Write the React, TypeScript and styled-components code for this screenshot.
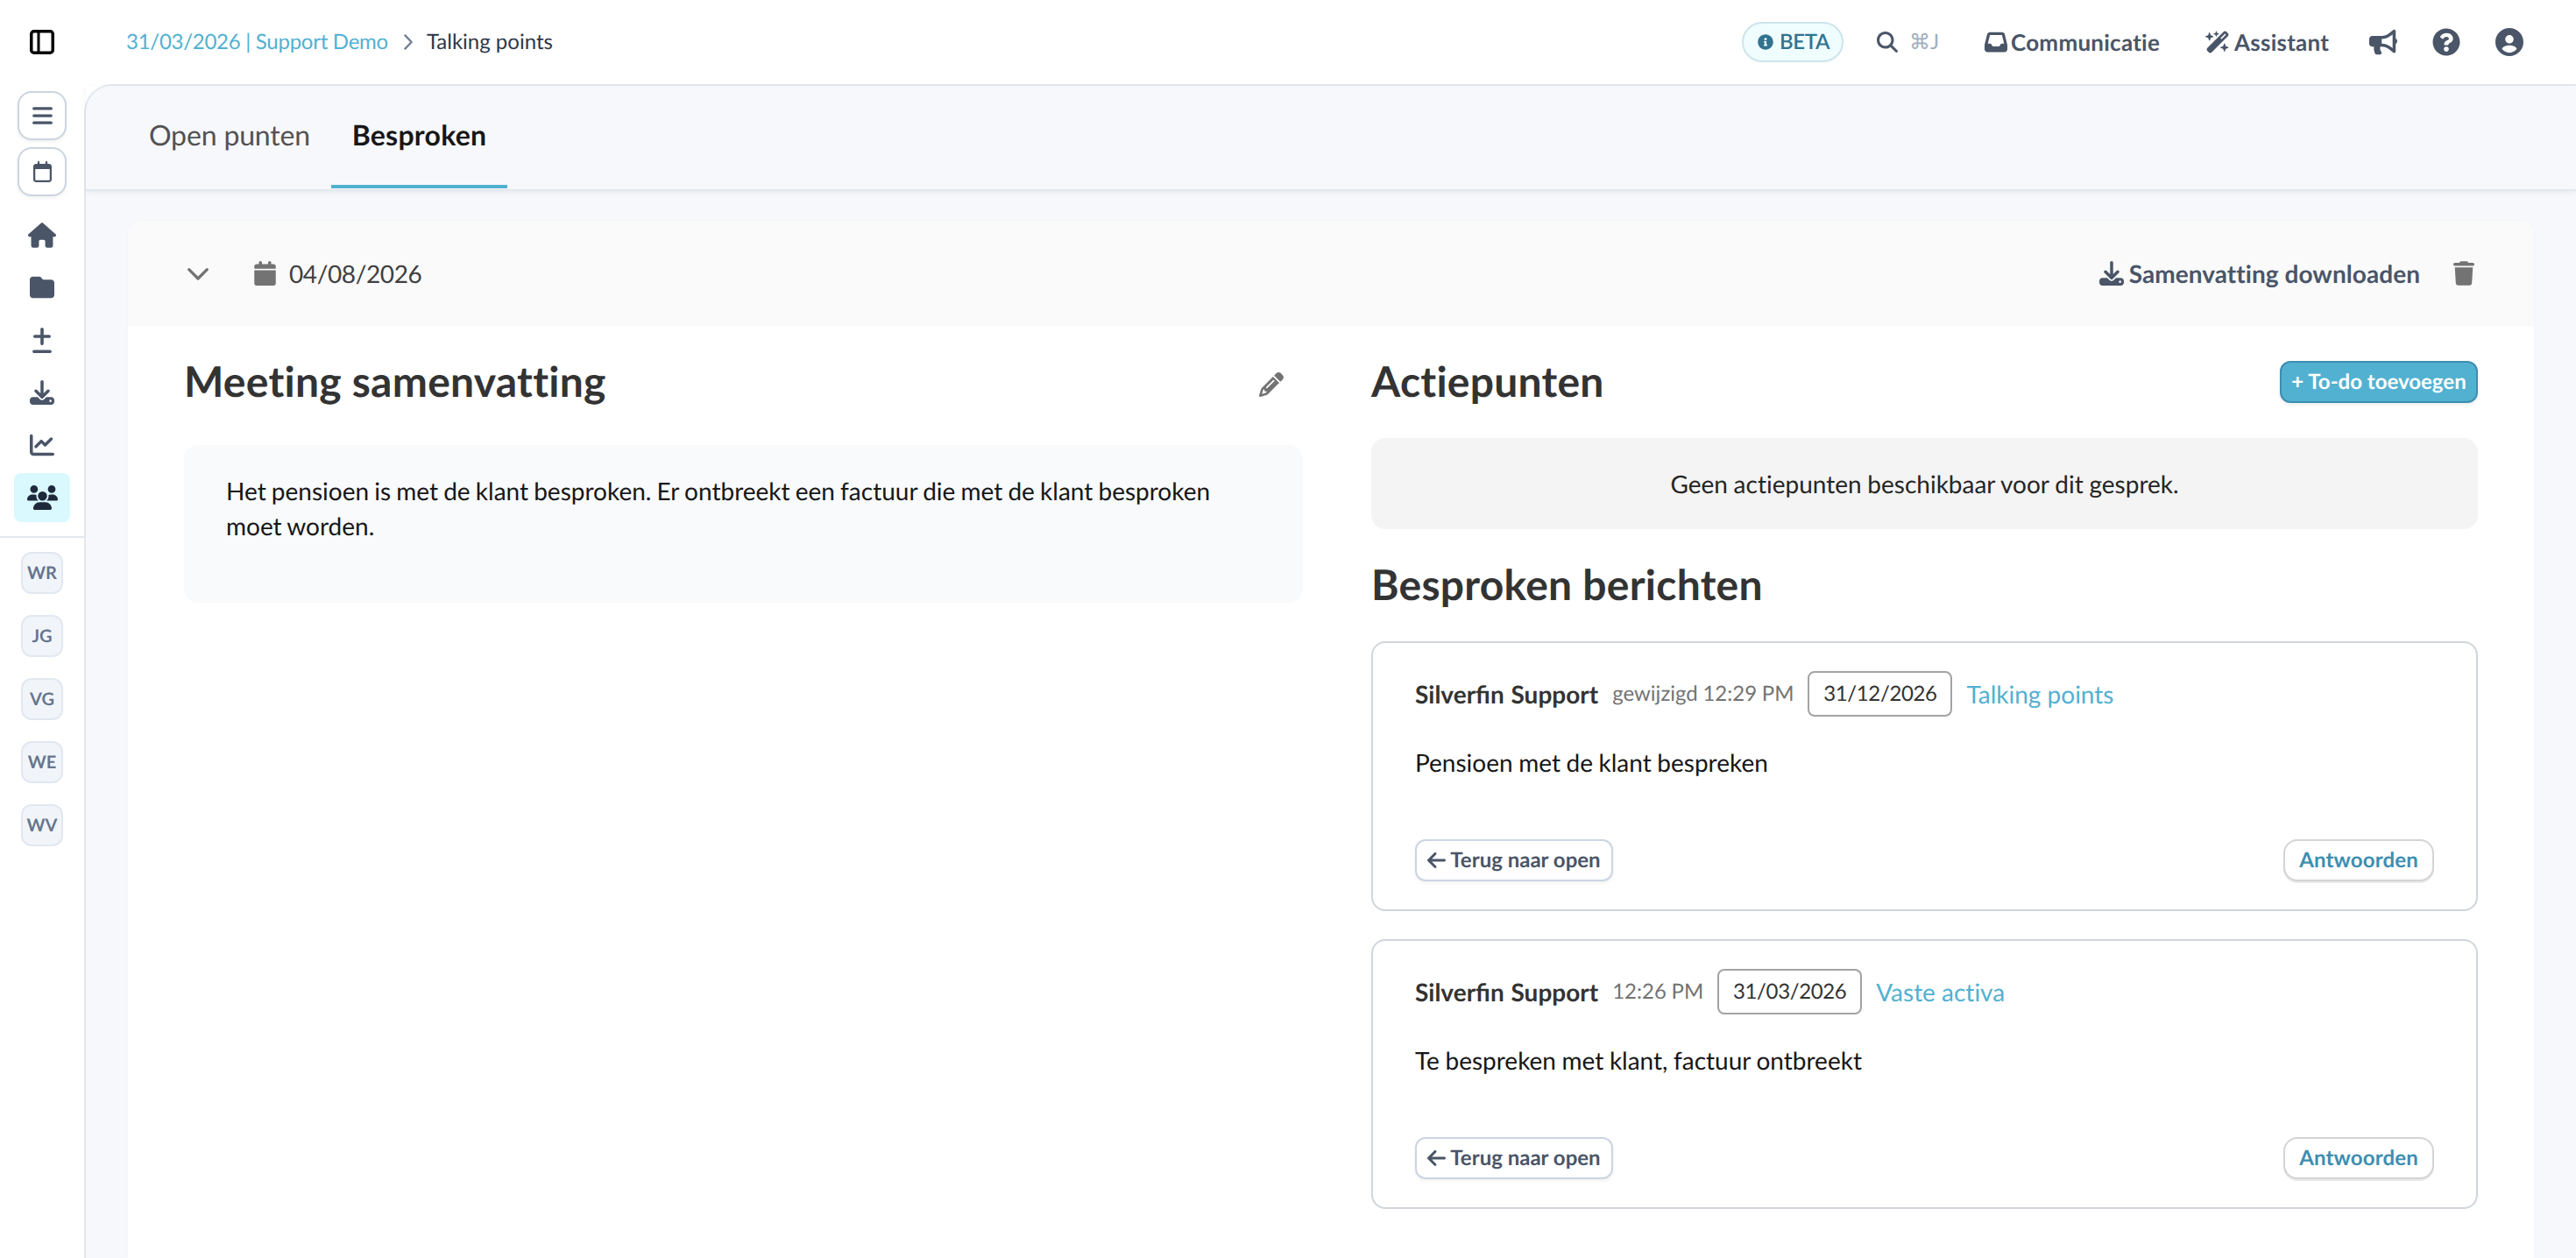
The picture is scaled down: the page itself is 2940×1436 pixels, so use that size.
import React from "react";
import styled, { createGlobalStyle } from "styled-components";
import {
  FaBars,
  FaRegCalendar,
  FaHouse,
  FaFolder,
  FaPlusMinus,
  FaDownload,
  FaChartLine,
  FaUsers,
  FaMagnifyingGlass,
  FaInbox,
  FaWandMagicSparkles,
  FaCalendar,
  FaTrash,
  FaPencil,
  FaArrowLeft,
} from "react-icons/fa6";
import { FaBullhorn, FaInfoCircle, FaQuestionCircle } from "react-icons/fa";

const slate = "#4a5568";
const line = "#e2e8ef";
const cyan = "#52b1d1";

const GlobalStyle = createGlobalStyle`
  *, *::before, *::after { box-sizing: border-box; }
  body {
    margin: 0;
    background: #fff;
    font-family: Lato, "DejaVu Sans", sans-serif;
    font-size: 28px;
    line-height: 40px;
    color: #171717;
    overflow: hidden;
    text-rendering: geometricPrecision;
    font-variant-ligatures: none;
  }
  button { font: inherit; font-variant-ligatures: none; text-rendering: inherit; margin: 0; cursor: pointer; }
  h2, p { margin: 0; }
`;

const Shell = styled.div`
  display: grid;
  grid-template-columns: 96px 1fr;
  grid-template-rows: 96px 1fr;
  width: 2940px;
  height: 1436px;
  overflow: hidden;
`;

const Icon = styled.span<{ $w: number; $h: number; $color?: string }>`
  display: inline-flex;
  flex: none;
  width: ${(p) => p.$w}px;
  height: ${(p) => p.$h}px;
  color: ${(p) => p.$color ?? "inherit"};
  svg {
    display: block;
    width: 100%;
    height: 100%;
  }
`;

const ToggleCell = styled.div`
  display: flex;
  align-items: center;
  justify-content: center;
`;

const TopBar = styled.header`
  display: flex;
  align-items: center;
  justify-content: space-between;
  padding: 0 60px 0 48px;
`;

const Breadcrumbs = styled.nav`
  display: flex;
  align-items: center;
  font-size: 24px;
  line-height: 32px;
  color: #2d3748;
`;

const CrumbLink = styled.a`
  color: ${cyan};
  margin-right: 18px;
  letter-spacing: -0.27px;
`;

const Crumb = styled.span`
  margin-left: 16px;
`;

const Tools = styled.div`
  display: flex;
  align-items: center;
  color: ${slate};
`;

const Beta = styled.span`
  display: flex;
  align-items: center;
  gap: 7px;
  width: 116px;
  height: 46px;
  margin-right: 38px;
  padding: 0 0 0 16px;
  border: 2px solid #cde4eb;
  border-radius: 23px;
  background: #f0fdff;
  color: #32738f;
  font-size: 24px;
  font-weight: 600;
  letter-spacing: -0.4px;
`;

const Search = styled.span`
  display: flex;
  align-items: center;
  width: 123px;
  gap: 13px;
`;

const Shortcut = styled.span`
  color: #a0aec0;
  font-size: 24px;
  line-height: 32px;
`;

const ToolLink = styled.a<{ $width: number; $gap: number }>`
  display: flex;
  align-items: center;
  gap: ${(p) => p.$gap}px;
  width: ${(p) => p.$width}px;
  font-size: 26px;
  font-weight: 700;
  letter-spacing: 0.25px;
  white-space: nowrap;
`;

const ToolIcons = styled.div`
  display: flex;
  gap: 40px;
`;

const Sidebar = styled.aside`
  display: flex;
  flex-direction: column;
  align-items: center;
  padding-top: 8px;
  color: ${slate};
`;

const SquareButton = styled.button`
  display: flex;
  align-items: center;
  justify-content: center;
  width: 56px;
  height: 56px;
  margin-bottom: 8px;
  padding: 0;
  border: 2px solid #cbd5e0;
  border-radius: 16px;
  background: #fff;
  color: ${slate};
  box-shadow: 0 2px 4px rgba(0, 0, 0, 0.06);
`;

const NavList = styled.nav`
  display: flex;
  flex-direction: column;
  gap: 4px;
  margin-top: 8px;
`;

const NavItem = styled.a<{ $active?: boolean }>`
  display: flex;
  align-items: center;
  justify-content: center;
  width: 64px;
  height: 56px;
  border-radius: 8px;
  background: ${(p) => (p.$active ? "#d9f9ff" : "transparent")};
  color: ${(p) => (p.$active ? "#1e293b" : slate)};
`;

const AvatarList = styled.div`
  display: flex;
  flex-direction: column;
  align-items: center;
  align-self: stretch;
  gap: 24px;
  margin-top: 16px;
  padding-top: 16px;
  border-top: 2px solid ${line};
`;

const Avatar = styled.span`
  display: flex;
  align-items: center;
  justify-content: center;
  width: 48px;
  height: 48px;
  border: 2px solid #e2e8f0;
  border-radius: 12px;
  background: #f1f5fa;
  color: #67758d;
  font-size: 20px;
  font-weight: 700;
`;

const Main = styled.main`
  display: flex;
  flex-direction: column;
  min-width: 0;
  border-top: 2px solid ${line};
  border-left: 2px solid ${line};
  border-top-left-radius: 32px;
  background: #f7f8fc;
`;

const Tabs = styled.div`
  display: flex;
  flex: none;
  height: 120px;
  padding-left: 48px;
  border-bottom: 2px solid ${line};
  box-shadow: 0 2px 6px rgba(0, 0, 0, 0.06);
`;

const Tab = styled.a<{ $active?: boolean; $width: number }>`
  display: flex;
  justify-content: center;
  width: ${(p) => p.$width}px;
  height: 117px;
  padding: 34px 0 0;
  border-bottom: 4px solid ${(p) => (p.$active ? cyan : "transparent")};
  color: ${(p) => (p.$active ? "#171717" : "#525252")};
  font-size: 32px;
  line-height: 44px;
  font-weight: ${(p) => (p.$active ? 700 : 400)};
  letter-spacing: ${(p) => (p.$active ? 0.25 : -0.15)}px;
`;

const Card = styled.section`
  display: flex;
  flex-direction: column;
  flex: 1;
  margin: 34px 48px 0 48px;
  border-radius: 16px 16px 0 0;
  background: #fff;
  box-shadow: 0 0 3px rgba(0, 0, 0, 0.03);
  overflow: hidden;
`;

const CardHeader = styled.div`
  display: flex;
  align-items: center;
  justify-content: space-between;
  height: 120px;
  padding: 0 68px 0 68px;
  background: #fafafa;
`;

const MeetingDate = styled.div`
  display: flex;
  align-items: center;
  color: #404040;
`;

const ToggleIcon = styled(Icon)`
  margin-top: 2px;
`;

const DateIcon = styled(Icon)`
  margin-left: 52px;
`;

const DateLabel = styled.span`
  margin-left: 15px;
  letter-spacing: -0.38px;
`;

const HeaderActions = styled.div`
  display: flex;
  align-items: center;
  color: ${slate};
`;

const DownloadLabel = styled.span`
  margin: 0 38px 0 6px;
  font-weight: 700;
  letter-spacing: 0.06px;
`;

const Columns = styled.div`
  display: grid;
  grid-template-columns: 1277px 1263px;
  column-gap: 78px;
  padding: 40px 64px 0;
`;

const Column = styled.div`
  display: flex;
  flex-direction: column;
`;

const HeadingRow = styled.div`
  display: flex;
  align-items: center;
  justify-content: space-between;
  height: 48px;
`;

const Heading = styled.h2`
  color: #333;
  font-size: 48px;
  line-height: 48px;
  font-weight: 700;
  letter-spacing: 0.25px;
`;

const EditButton = styled.span`
  display: flex;
  margin: 6px 22px 0 0;
  color: #737373;
`;

const Summary = styled.div`
  height: 180px;
  margin-top: 48px;
  padding: 32px 64px 0 48px;
  border-radius: 16px;
  background: #f8fafc;
  word-spacing: -1px;
`;

const PrimaryButton = styled.button`
  height: 48px;
  width: 226px;
  padding: 0;
  border: 2px solid #3d8eb0;
  border-radius: 12px;
  background: ${cyan};
  color: #fff;
  font-size: 24px;
  line-height: 32px;
  font-weight: 700;
  white-space: nowrap;
  box-shadow: 0 2px 4px rgba(0, 0, 0, 0.08);
`;

const EmptyBox = styled.div`
  display: flex;
  align-items: center;
  justify-content: center;
  height: 104px;
  margin: 40px 0;
  border-radius: 16px;
  background: #f4f4f4;
  color: #262626;
  word-spacing: -0.4px;
`;

const Messages = styled.div`
  display: flex;
  flex-direction: column;
  gap: 32px;
  margin-top: 40px;
`;

const Message = styled.article`
  display: flex;
  flex-direction: column;
  height: 308px;
  padding: 32px 48px;
  border: 2px solid #d1d5db;
  border-radius: 16px;
`;

const MessageMeta = styled.div`
  display: flex;
  align-items: center;
  gap: 16px;
  height: 52px;
`;

const Author = styled.span`
  color: #333;
  font-weight: 700;
  font-variant-ligatures: normal;
  word-spacing: 1px;
`;

const Time = styled.span`
  color: #737373;
  font-size: 24px;
  word-spacing: -0.5px;
`;

const PeriodBox = styled.span`
  display: flex;
  align-items: center;
  justify-content: center;
  width: 165px;
  height: 52px;
  border: 2px solid #a3a3a3;
  border-radius: 8px;
  color: #333;
  font-size: 24px;
  letter-spacing: -0.36px;
`;

const TopicLink = styled.a`
  color: ${cyan};
`;

const MessageText = styled.p`
  margin-top: 32px;
  word-spacing: -0.6px;
`;

const MessageActions = styled.div`
  display: flex;
  justify-content: space-between;
  margin-top: auto;
`;

const BackButton = styled.button`
  display: flex;
  align-items: center;
  justify-content: center;
  gap: 5px;
  width: 226px;
  height: 48px;
  padding: 0;
  border: 2px solid #cbd5e3;
  border-radius: 12px;
  background: #fff;
  color: ${slate};
  font-size: 24px;
  font-weight: 700;
  white-space: nowrap;
  box-shadow: 0 2px 4px rgba(0, 0, 0, 0.06);
`;

const ReplyButton = styled.button`
  width: 172px;
  height: 48px;
  padding: 0;
  border: 2px solid #d4d4d4;
  border-radius: 16px;
  background: #fff;
  color: #3d8eb0;
  font-size: 24px;
  font-weight: 700;
  letter-spacing: 0.15px;
  box-shadow: 0 2px 0 #e9e9e9;
`;

const PanelIcon = () => (
  <svg viewBox="0 0 28 28" fill="none" stroke="#000">
    <rect x="1.75" y="1.75" width="24.5" height="24.5" rx="3" strokeWidth="3.5" />
    <path d="M10 2v24" strokeWidth="3" />
  </svg>
);

const ChevronRight = () => (
  <svg viewBox="0 0 10 18" fill="none" stroke="#718096" strokeWidth="2.4" strokeLinecap="round" strokeLinejoin="round">
    <path d="M1.4 1.4 8.6 9l-7.200 7.600" />
  </svg>
);

const ChevronDown = () => (
  <svg viewBox="0 0 24 14" fill="none" stroke="#737373" strokeWidth="3.2" strokeLinecap="round" strokeLinejoin="round">
    <path d="M1.700 1.700 12 12 22.300 1.700" />
  </svg>
);

const AccountIcon = () => (
  <svg viewBox="2 2 20 20" fill="currentColor">
    <path d="M12 2C6.480 2 2 6.480 2 12s4.480 10 10 10 10-4.480 10-10S17.520 2 12 2zm0 5a3 3 0 1 1 0 6 3 3 0 0 1 0-6zm0 12.600c-2.300 0-4.200-1.100-5.300-2.700.500-1.500 2.900-2.500 5.300-2.500s4.800 1 5.300 2.500c-1.100 1.600-3 2.700-5.300 2.700z" />
  </svg>
);

const navItems = [
  { icon: <FaHouse />, w: 32, h: 29 },
  { icon: <FaFolder />, w: 28, h: 28 },
  { icon: <FaPlusMinus />, w: 22, h: 29 },
  { icon: <FaDownload />, w: 28, h: 28 },
  { icon: <FaChartLine />, w: 28, h: 28 },
  { icon: <FaUsers />, w: 35, h: 28, active: true },
];

const avatars = ["WR", "JG", "VG", "WE", "WV"];

const messages = [
  {
    author: "Silverfin Support",
    time: "gewijzigd 12:29 PM",
    period: "31/12/2026",
    topic: "Talking points",
    text: "Pensioen met de klant bespreken",
  },
  {
    author: "Silverfin Support",
    time: "12:26 PM",
    period: "31/03/2026",
    topic: "Vaste activa",
    text: "Te bespreken met klant, factuur ontbreekt",
  },
];

export default function App() {
  return (
    <>
      <GlobalStyle />
      <Shell>
        <ToggleCell>
          <Icon $w={28} $h={28}><PanelIcon /></Icon>
        </ToggleCell>
        <TopBar>
          <Breadcrumbs>
            <CrumbLink>31/03/2026 | Support Demo</CrumbLink>
            <Icon $w={10} $h={18}><ChevronRight /></Icon>
            <Crumb>Talking points</Crumb>
          </Breadcrumbs>
          <Tools>
            <Beta>
              <Icon $w={18} $h={18}><FaInfoCircle /></Icon>
              BETA
            </Beta>
            <Search>
              <Icon $w={24} $h={24}><FaMagnifyingGlass /></Icon>
              <Shortcut>⌘J</Shortcut>
            </Search>
            <ToolLink $width={252} $gap={4}>
              <Icon $w={26} $h={26}><FaInbox /></Icon>
              Communicatie
            </ToolLink>
            <ToolLink $width={187} $gap={5}>
              <Icon $w={28} $h={26}><FaWandMagicSparkles /></Icon>
              Assistant
            </ToolLink>
            <ToolIcons>
              <Icon $w={32} $h={32}><FaBullhorn /></Icon>
              <Icon $w={32} $h={32}><FaQuestionCircle /></Icon>
              <Icon $w={32} $h={32}><AccountIcon /></Icon>
            </ToolIcons>
          </Tools>
        </TopBar>

        <Sidebar>
          <SquareButton>
            <Icon $w={23} $h={26}><FaBars /></Icon>
          </SquareButton>
          <SquareButton>
            <Icon $w={21} $h={24}><FaRegCalendar /></Icon>
          </SquareButton>
          <NavList>
            {navItems.map((item, i) => (
              <NavItem key={i} $active={item.active}>
                <Icon $w={item.w} $h={item.h}>{item.icon}</Icon>
              </NavItem>
            ))}
          </NavList>
          <AvatarList>
            {avatars.map((a) => (
              <Avatar key={a}>{a}</Avatar>
            ))}
          </AvatarList>
        </Sidebar>

        <Main>
          <Tabs>
            <Tab $width={232}>Open punten</Tab>
            <Tab $active $width={201}>Besproken</Tab>
          </Tabs>
          <Card>
            <CardHeader>
              <MeetingDate>
                <ToggleIcon $w={24} $h={14}><ChevronDown /></ToggleIcon>
                <DateIcon $w={25} $h={28} $color="#737373"><FaCalendar /></DateIcon>
                <DateLabel>04/08/2026</DateLabel>
              </MeetingDate>
              <HeaderActions>
                <Icon $w={28} $h={28}><FaDownload /></Icon>
                <DownloadLabel>Samenvatting downloaden</DownloadLabel>
                <Icon $w={24} $h={28} $color="#737373"><FaTrash /></Icon>
              </HeaderActions>
            </CardHeader>
            <Columns>
              <Column>
                <HeadingRow>
                  <Heading>Meeting samenvatting</Heading>
                  <EditButton>
                    <Icon $w={28} $h={28}><FaPencil /></Icon>
                  </EditButton>
                </HeadingRow>
                <Summary>
                  Het pensioen is met de klant besproken. Er ontbreekt een factuur die met de klant besproken moet
                  worden.
                </Summary>
              </Column>
              <Column>
                <HeadingRow>
                  <Heading>Actiepunten</Heading>
                  <PrimaryButton>+ To-do toevoegen</PrimaryButton>
                </HeadingRow>
                <EmptyBox>Geen actiepunten beschikbaar voor dit gesprek.</EmptyBox>
                <Heading>Besproken berichten</Heading>
                <Messages>
                  {messages.map((m) => (
                    <Message key={m.text}>
                      <MessageMeta>
                        <Author>{m.author}</Author>
                        <Time>{m.time}</Time>
                        <PeriodBox>{m.period}</PeriodBox>
                        <TopicLink>{m.topic}</TopicLink>
                      </MessageMeta>
                      <MessageText>{m.text}</MessageText>
                      <MessageActions>
                        <BackButton>
                          <Icon $w={21} $h={24}><FaArrowLeft /></Icon>
                          Terug naar open
                        </BackButton>
                        <ReplyButton>Antwoorden</ReplyButton>
                      </MessageActions>
                    </Message>
                  ))}
                </Messages>
              </Column>
            </Columns>
          </Card>
        </Main>
      </Shell>
    </>
  );
}
